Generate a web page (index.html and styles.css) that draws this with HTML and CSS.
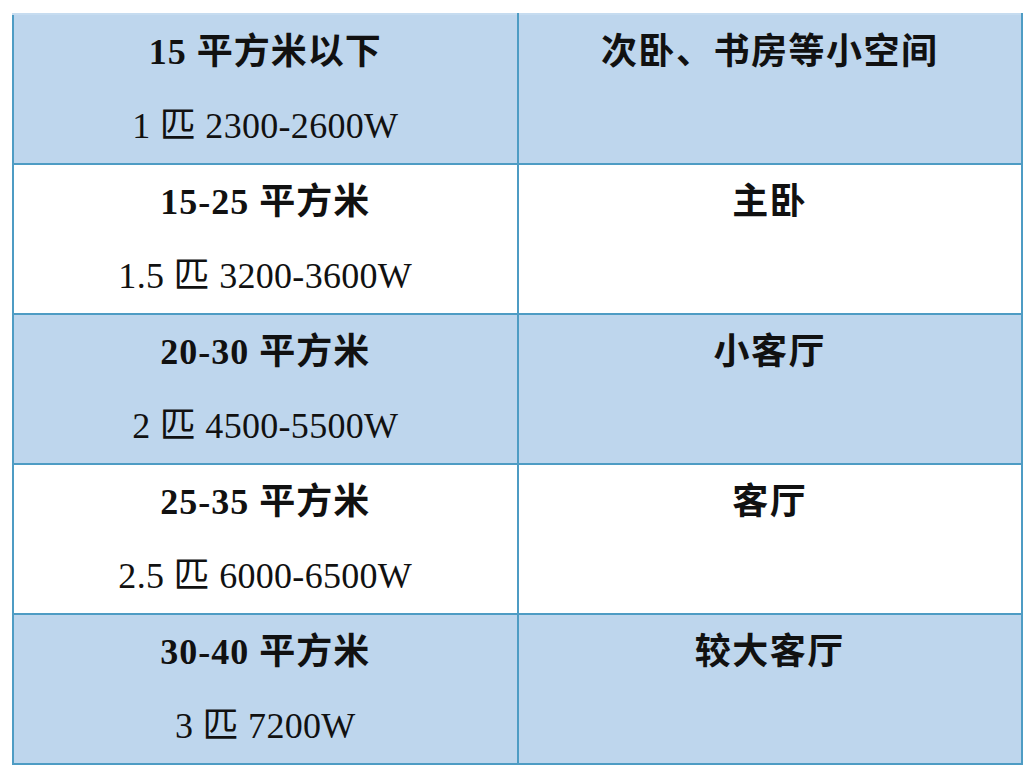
FILE: index.html
```html
<!DOCTYPE html>
<html lang="zh-CN">
<head>
<meta charset="utf-8">
<title>空调匹数选择</title>
<link rel="stylesheet" href="styles.css">
</head>
<body>
<table class="spec">
  <tbody>
    <tr class="row shaded">
      <td class="cell"><div class="line strong">15 平方米以下</div><div class="line">1 匹 2300-2600W</div></td>
      <td class="cell"><div class="line strong wide">次卧、书房等小空间</div></td>
    </tr>
    <tr class="row">
      <td class="cell"><div class="line strong">15-25 平方米</div><div class="line">1.5 匹 3200-3600W</div></td>
      <td class="cell"><div class="line strong wide">主卧</div></td>
    </tr>
    <tr class="row shaded">
      <td class="cell"><div class="line strong">20-30 平方米</div><div class="line">2 匹 4500-5500W</div></td>
      <td class="cell"><div class="line strong wide">小客厅</div></td>
    </tr>
    <tr class="row">
      <td class="cell"><div class="line strong">25-35 平方米</div><div class="line">2.5 匹 6000-6500W</div></td>
      <td class="cell"><div class="line strong wide">客厅</div></td>
    </tr>
    <tr class="row shaded">
      <td class="cell"><div class="line strong">30-40 平方米</div><div class="line">3 匹 7200W</div></td>
      <td class="cell"><div class="line strong wide">较大客厅</div></td>
    </tr>
  </tbody>
</table>
</body>
</html>
```

FILE: styles.css
```css
html, body {
  margin: 0;
  padding: 0;
  background: #ffffff;
}

body {
  padding: 13px 0 0 12px;
  font-family: "Liberation Serif", "Noto Sans CJK SC", serif;
  color: #111111;
}

.spec {
  border-collapse: collapse;
  width: 1011px;
  table-layout: fixed;
}

.cell {
  width: 50%;
  border: 2px solid #4e9cc4;
  padding: 0;
  vertical-align: top;
  text-align: center;
  height: 148px;
}

.row:first-child .cell {
  border-top-color: #c6dcf0;
}

.shaded .cell {
  background: #bed6ed;
}

.line {
  height: 74px;
  line-height: 74px;
  font-size: 36px;
  font-weight: 400;
  white-space: nowrap;
  letter-spacing: 0.3px;
}

.line.strong {
  font-weight: 700;
  letter-spacing: 1px;
}

.line.wide {
  letter-spacing: 1.5px;
}
```
